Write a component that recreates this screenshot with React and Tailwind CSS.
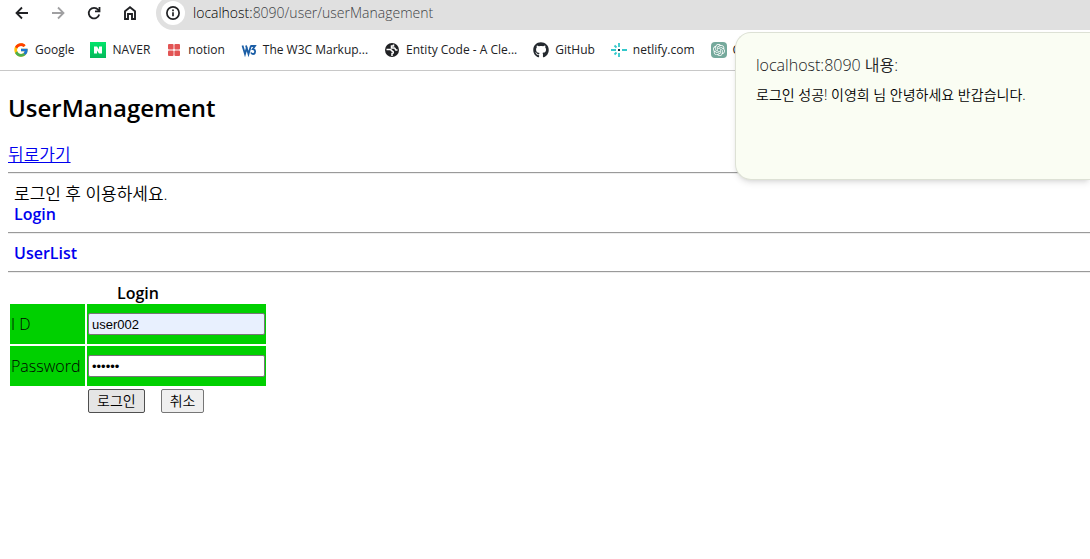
import { useState } from "react";
import { FaGithub } from "react-icons/fa";
import { FcGoogle } from "react-icons/fc";
import { SiOpenai } from "react-icons/si";

function BackIcon() {
    return (
        <svg width="20" height="20" viewBox="0 0 20 20" fill="none" stroke="currentColor" strokeWidth="1.800">
            <path d="M16 10H5M10 4.500L4.500 10L10 15.500" />
        </svg>
    );
}

function ForwardIcon() {
    return (
        <svg width="20" height="20" viewBox="0 0 20 20" fill="none" stroke="currentColor" strokeWidth="1.800">
            <path d="M4 10H15M10 4.500L15.500 10L10 15.500" />
        </svg>
    );
}

function ReloadIcon() {
    return (
        <svg width="20" height="20" viewBox="0 0 20 20" fill="none" stroke="currentColor" strokeWidth="1.800">
            <path d="M15.200 11.500A5.300 5.300 0 1 1 14.200 6.800L15 7.800M15.500 4V8.300H11" />
        </svg>
    );
}

function HomeIcon() {
    return (
        <svg width="20" height="20" viewBox="0 0 20 20" fill="none" stroke="currentColor" strokeWidth="1.900">
            <path d="M5 8.200L10 4.200L15 8.200V16H12V11H8V16H5Z" />
        </svg>
    );
}

function InfoIcon() {
    return (
        <svg width="16" height="16" viewBox="0 0 16 16" fill="none" stroke="currentColor" strokeWidth="1.700">
            <circle cx="8" cy="8" r="6.100" />
            <path d="M8 7.200V11.200M8 4.600V6.200" />
        </svg>
    );
}

function NaverIcon() {
    return (
        <svg width="16" height="16" viewBox="0 0 16 16">
            <defs>
                <linearGradient id="naver" x1="0" y1="0" x2="0" y2="1">
                    <stop offset="0" stopColor="#03e56b" />
                    <stop offset="1" stopColor="#04b85a" />
                </linearGradient>
            </defs>
            <rect width="16" height="16" fill="url(#naver)" />
            <path d="M4 4.500h3l2 3V4.500h3v7H9L7 8.500V11.500H4z" fill="#fff" />
        </svg>
    );
}

function NotionIcon() {
    return (
        <svg width="16" height="16" viewBox="0 0 16 16" fill="#e25454">
            <rect x="2" y="2" width="5.600" height="5.600" rx="1" />
            <rect x="8.400" y="2" width="5.600" height="5.600" rx="1" />
            <rect x="2" y="8.400" width="5.600" height="5.600" rx="1" />
            <rect x="8.400" y="8.400" width="5.600" height="5.600" rx="1" />
        </svg>
    );
}

function W3Icon() {
    return (
        <svg width="16" height="16" viewBox="0 0 16 16" fill="none" stroke="#1b5ea6" strokeWidth="1.800">
            <path d="M1.500 3.500L4 12L6 5M5 3.500L7.500 12L10 3.500" />
            <path d="M10 4H14L11.800 7.200C15 7.200 14.800 12 12 12C11 12 10.400 11.500 10 10.500" />
        </svg>
    );
}

function GlobeIcon() {
    return (
        <svg width="16" height="16" viewBox="0 0 16 16">
            <circle cx="8" cy="8" r="7" fill="#202124" />
            <path d="M2.500 7.500H6C7.500 7.500 7.500 9 8.500 9.300C9.800 9.800 9.500 11.500 8 11.500V14M9.500 2.500V4H7.500V6H10.500C11.500 6 11 8 12 8H13.500" fill="none" stroke="#fff" strokeWidth="1.500" />
        </svg>
    );
}

function NetlifyIcon() {
    return (
        <svg width="16" height="16" viewBox="0 0 16 16">
            <g stroke="#32c8cb" strokeWidth="1.800" fill="none">
                <path d="M0 8H5M11 8H16M8 1V5M8 11V15M3.500 12.500L5.500 10.500M3.500 3.500L5.500 5.500" />
            </g>
            <rect x="7" y="7" width="2" height="2" fill="#123b44" />
        </svg>
    );
}

function OpenAiIcon() {
    return (
        <span className="flex size-4 items-center justify-center rounded-sm bg-[#75a99c]">
            <SiOpenai size={12} color="#fff" />
        </span>
    );
}

const bookmarks = [
    { name: "Google", icon: <FcGoogle size={16} /> },
    { name: "NAVER", icon: <NaverIcon /> },
    { name: "notion", icon: <NotionIcon /> },
    { name: "The W3C Markup...", icon: <W3Icon /> },
    { name: "Entity Code - A Cle...", icon: <GlobeIcon /> },
    { name: "GitHub", icon: <FaGithub size={16} color="#24292f" /> },
    { name: "netlify.com", icon: <NetlifyIcon /> },
    { name: "C", icon: <OpenAiIcon /> },
];

function BrowserBar() {
    return (
        <header className="border-b border-[#c8c8c8] text-[#202124]">
            <div className="-mt-1 flex h-[34px] items-center">
                <div className="flex items-center gap-4 pr-4 pl-3">
                    <button aria-label="Back" className="size-5"><BackIcon /></button>
                    <button aria-label="Forward" className="size-5 text-[#a0a0a2]"><ForwardIcon /></button>
                    <button aria-label="Reload" className="size-5"><ReloadIcon /></button>
                    <button aria-label="Home" className="size-5"><HomeIcon /></button>
                </div>
                <div className="flex h-full flex-1 items-center rounded-l-full bg-[#e0e0e0] pl-[5px]">
                    <button aria-label="Site info" className="flex size-6 items-center justify-center rounded-full bg-white">
                        <InfoIcon />
                    </button>
                    <p className="pl-2 text-sm font-light text-[#404347]">
                        <span className="text-black">localhost:</span>8090/user/userManagement
                    </p>
                </div>
            </div>
            <nav className="flex h-10 items-center gap-4 overflow-hidden pl-[13px] text-xs whitespace-nowrap">
                {bookmarks.map((b) => (
                    <a key={b.name} href="#" className="flex shrink-0 items-center gap-1.5">
                        {b.icon}
                        <span>{b.name}</span>
                    </a>
                ))}
            </nav>
        </header>
    );
}

function AlertBox() {
    return (
        <div role="alertdialog" aria-labelledby="alertTitle" className="absolute top-8 right-0 left-[735px] h-[148px] rounded-l-2xl border border-r-0 border-[#dde1d5] bg-[#fafdf3] px-5 py-5 text-[#202124] shadow-md">
            <h1 id="alertTitle" className="text-base leading-6 font-[350]">localhost:8090 내용:</h1>
            <p className="mt-2 text-sm leading-5 font-[350] text-black">로그인 성공! 이영희 님 안녕하세요 반갑습니다.</p>
        </div>
    );
}

function Line() {
    return <hr className="mt-[7px] mb-[9px] h-[2px] border-0 border-t border-[#9a9a9a] bg-[#eeeeee]" />;
}

export default function App() {
    const [user, setUser] = useState({ id: "user002", password: "abc123" });

    const handleInput = (e) => {
        setUser({ ...user, [e.target.name]: e.target.value });
    };

    return (
        <div className="relative min-h-screen overflow-hidden bg-white font-['Open_Sans','Noto_Sans_CJK_KR',sans-serif] text-black">
            <BrowserBar />
            <main className="pt-[21px] pl-2 text-base leading-[21px]">
                <h2 className="mb-5 text-2xl font-semibold leading-8">UserManagement</h2>
                <a href="#" className="block w-fit text-[17px] font-[350] text-[#0000ee] underline">뒤로가기</a>
                <Line />
                <div className="pl-1.5">
                    <p className="text-[17px] font-[350]">로그인 후 이용하세요.</p>
                    <a href="#" className="block w-fit font-semibold text-[#0000ee]">Login</a>
                </div>
                <Line />
                <div className="pl-1.5">
                    <a href="#" className="block w-fit font-semibold text-[#0000ee]">UserList</a>
                </div>
                <Line />
                <form onSubmit={(e) => e.preventDefault()}>
                    <table className="border-separate border-spacing-[2px]">
                        <thead>
                            <tr>
                                <th colSpan="2" className="h-[18px] p-0 leading-[18px] font-semibold">Login</th>
                            </tr>
                        </thead>
                        <tbody>
                            <tr className="h-10">
                                <td className="w-[75px] bg-[#00d000] p-px font-light"><label htmlFor="id">I D</label></td>
                                <td className="bg-[#00d000] p-px">
                                    <input id="id" name="id" type="text" value={user.id} onChange={handleInput} className="block h-[22px] w-[177px] rounded-xs border border-[#767676] bg-[#e8f0fe] px-[3px] font-['Liberation_Sans',sans-serif] text-[13px] leading-4" />
                                </td>
                            </tr>
                            <tr className="h-10">
                                <td className="bg-[#00d000] p-px font-light"><label htmlFor="password">Password</label></td>
                                <td className="bg-[#00d000] p-px">
                                    <input id="password" name="password" type="password" value={user.password} onChange={handleInput} className="block h-[22px] w-[177px] rounded-xs border border-[#767676] bg-white px-[3px] font-['Liberation_Sans',sans-serif] text-[13px] leading-4" />
                                </td>
                            </tr>
                            <tr>
                                <td></td>
                                <td className="p-px">
                                    <div className="flex gap-4 text-sm">
                                        <button type="submit" className="h-6 rounded-xs border border-[#4f4f4f] bg-[#e5e5e5] px-2 font-[350]">로그인</button>
                                        <button type="reset" className="h-6 rounded-xs border border-[#767676] bg-[#efefef] px-2 font-[350]">취소</button>
                                    </div>
                                </td>
                            </tr>
                        </tbody>
                    </table>
                </form>
            </main>
            <AlertBox />
        </div>
    );
}
